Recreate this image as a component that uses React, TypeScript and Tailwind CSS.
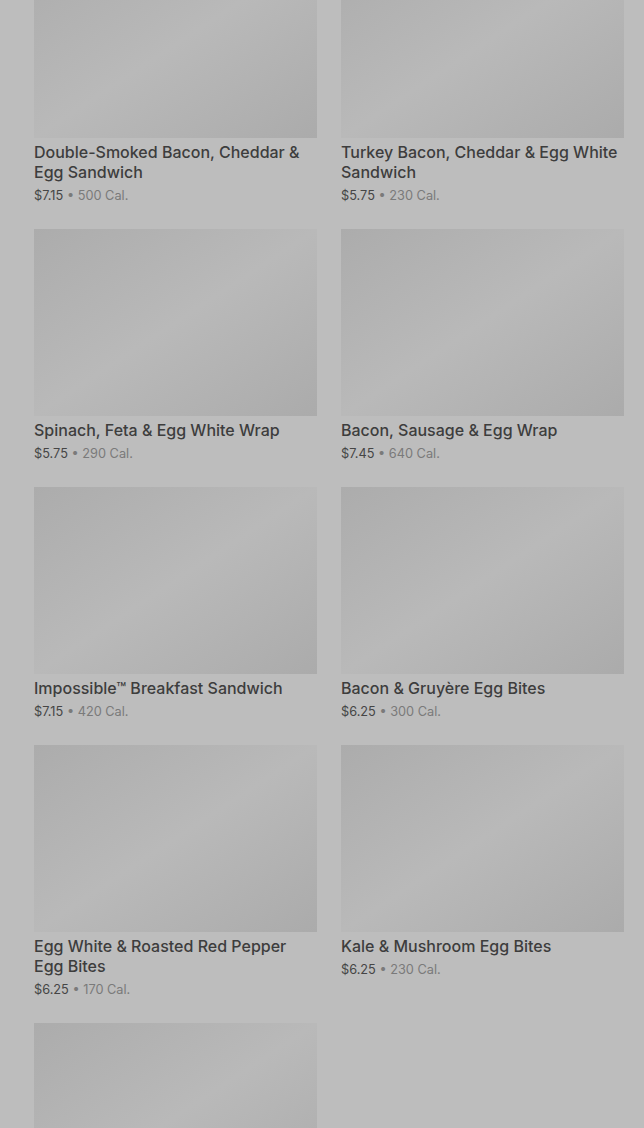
const ITEMS = [
  { name: "Double-Smoked Bacon, Cheddar & Egg Sandwich", price: "$7.15", cal: "500 Cal." },
  { name: "Turkey Bacon, Cheddar & Egg White Sandwich", price: "$5.75", cal: "230 Cal." },
  { name: "Spinach, Feta & Egg White Wrap", price: "$5.75", cal: "290 Cal." },
  { name: "Bacon, Sausage & Egg Wrap", price: "$7.45", cal: "640 Cal." },
  { name: "Impossible™ Breakfast Sandwich", price: "$7.15", cal: "420 Cal." },
  { name: "Bacon & Gruyère Egg Bites", price: "$6.25", cal: "300 Cal." },
  { name: "Egg White & Roasted Red Pepper Egg Bites", price: "$6.25", cal: "170 Cal." },
  { name: "Kale & Mushroom Egg Bites", price: "$6.25", cal: "230 Cal." },
  { name: "", price: "", cal: "" },
];

export default function App() {
  return (
    <div
      className="h-[1128px] w-[644px] overflow-hidden bg-[#bdbdbd]"
      style={{ fontFamily: "Inter, 'Noto Sans', sans-serif" }}
    >
      <div className="-mt-[49px] grid grid-cols-2 gap-x-6 gap-y-6 pl-[34px] pr-[20px]">
        {ITEMS.map((item, i) => (
          <MenuCard key={i} {...item} />
        ))}
      </div>
    </div>
  );
}

function MenuCard({ name, price, cal }: { name: string; price: string; cal: string }) {
  return (
    <div>
      <div className="h-[187px] w-full bg-gradient-to-br from-[#acacac] via-[#b9b9b9] to-[#ababab]" />
      {name && (
        <div className="pt-1">
          <h3 className="text-base font-medium leading-5 text-[#3d3d3d]">{name}</h3>
          <p className="mt-[5px] text-[12.75px] leading-[18px]">
            <span className="text-[#454545]">{price}</span>
            <span className="text-[#7a7a7a]"> • {cal}</span>
          </p>
        </div>
      )}
    </div>
  );
}
